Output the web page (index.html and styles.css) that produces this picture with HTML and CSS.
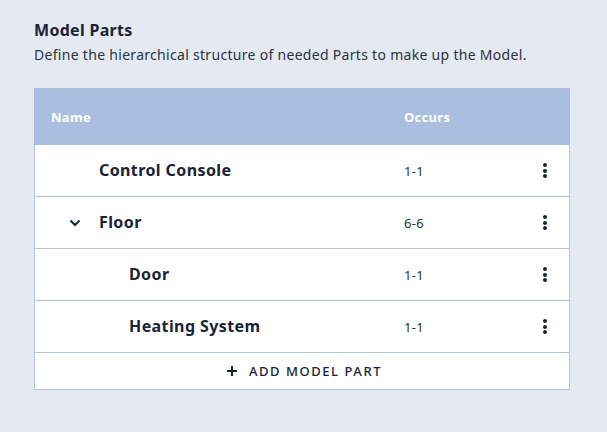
FILE: index.html
```html
<!DOCTYPE html>
<html>
<head>
<meta charset="utf-8">
<link rel="stylesheet" href="styles.css">
</head>
<body>
<main class="page">
  <h1 class="title">Model Parts</h1>
  <p class="subtitle">Define the hierarchical structure of needed Parts to make up the Model.</p>
  <div class="table">
    <div class="row head">
      <div class="cell name-h">Name</div>
      <div class="cell">Occurs</div>
      <div class="cell"></div>
    </div>
    <div class="row">
      <div class="cell name lvl0"><span class="toggle"></span>Control Console</div>
      <div class="cell occ">1-1</div>
      <div class="cell act"><span class="kebab"><i></i><i></i><i></i></span></div>
    </div>
    <div class="row">
      <div class="cell name lvl0"><span class="toggle"><svg width="12" height="8" viewBox="0 0 12 8"><path d="M1.5 1.5 L6 6 L10.5 1.5" fill="none" stroke="#1a2333" stroke-width="2"/></svg></span>Floor</div>
      <div class="cell occ">6-6</div>
      <div class="cell act"><span class="kebab"><i></i><i></i><i></i></span></div>
    </div>
    <div class="row">
      <div class="cell name lvl1"><span class="toggle"></span>Door</div>
      <div class="cell occ">1-1</div>
      <div class="cell act"><span class="kebab"><i></i><i></i><i></i></span></div>
    </div>
    <div class="row">
      <div class="cell name lvl1"><span class="toggle"></span>Heating System</div>
      <div class="cell occ">1-1</div>
      <div class="cell act"><span class="kebab"><i></i><i></i><i></i></span></div>
    </div>
    <div class="add">
      <svg width="12" height="12" viewBox="0 0 12 12"><path d="M6 1 V11 M1 6 H11" stroke="#1a2333" stroke-width="2"/></svg>
      <span>ADD MODEL PART</span>
    </div>
  </div>
</main>
</body>
</html>
```

FILE: styles.css
```css
* { box-sizing: border-box; }
html, body { margin: 0; padding: 0; }
body {
  background: #e5e9f1;
  font-family: "Noto Sans", "Open Sans", sans-serif;
  color: #1a2333;
  width: 607px;
  height: 432px;
  letter-spacing: 0.3px;
}
.page {
  padding: 19px 37px 0 34px;
}
.title {
  margin: 0;
  font-size: 16px;
  line-height: 22px;
  font-weight: 700;
}
.subtitle {
  margin: 4px 0 0;
  font-size: 14px;
  line-height: 20px;
  color: #2b3340;
}
.table {
  margin-top: 23px;
  width: 536px;
  border: 1px solid #b2c4e1;
  border-top: none;
  background: #fff;
}
.row {
  display: grid;
  grid-template-columns: 369px 1fr 48px;
  height: 52px;
  border-bottom: 1px solid #b2c4e1;
  align-items: center;
}
.row.head {
  background: #aabfdf;
  height: 57px;
  border-bottom: none;
  margin: 0 -1px;
  padding: 0 1px;
  color: #fff;
  font-weight: 700;
  font-size: 13px;
}
.name-h { padding-left: 16px; }
.name {
  display: flex;
  align-items: center;
  font-size: 16px;
  font-weight: 700;
  letter-spacing: 0.4px;
  padding-bottom: 1px;
}
.lvl0 { padding-left: 34px; }
.lvl1 { padding-left: 64px; }
.toggle {
  width: 30px;
  display: inline-flex;
  align-items: center;
  padding-top: 2px;
}
.occ {
  font-size: 13px;
  color: #2b3340;
}
.act {
  display: flex;
  justify-content: center;
}
.kebab {
  display: flex;
  flex-direction: column;
  gap: 1.5px;
}
.kebab i {
  width: 4px;
  height: 4px;
  border-radius: 50%;
  background: #1a2333;
}
.add {
  height: 36px;
  display: flex;
  align-items: center;
  justify-content: center;
  gap: 11px;
  padding-left: 4px;
  font-size: 13px;
  font-weight: 500;
  letter-spacing: 1.55px;
  color: #1a2333;
}
```
